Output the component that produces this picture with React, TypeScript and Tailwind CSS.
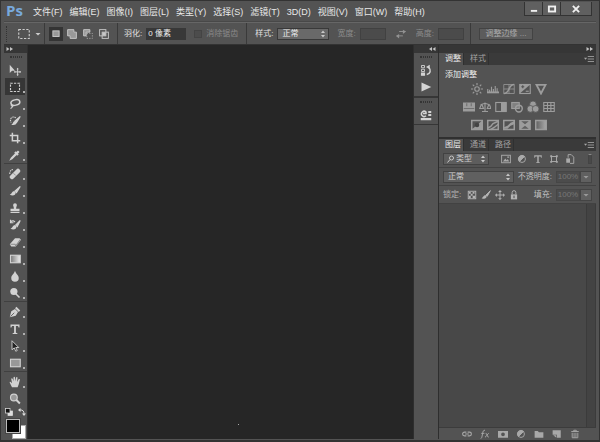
import type { ReactNode } from 'react'

const menus = [
  ['文件', 'F'],
  ['编辑', 'E'],
  ['图像', 'I'],
  ['图层', 'L'],
  ['类型', 'Y'],
  ['选择', 'S'],
  ['滤镜', 'T'],
  ['3D', 'D'],
  ['视图', 'V'],
  ['窗口', 'W'],
  ['帮助', 'H'],
]

function Icon({ children, className = 'size-3' }: { children: ReactNode; className?: string }) {
  return (
    <svg viewBox="0 0 16 16" className={`shrink-0 ${className}`} fill="none" stroke="currentColor" strokeWidth="1.5" aria-hidden="true">
      {children}
    </svg>
  )
}

// Toolbox, split into the groups that have a divider between them
const toolGroups: { name: string; art: ReactNode; active?: boolean; single?: boolean }[][] = [
  [
    { name: '移动工具', single: true, art: <><path d="M1 1v11l3-3h4z" fill="currentColor" stroke="none" /><path d="M11.500 6v9M7 10.500h9" strokeWidth="1.300" /><path d="M11.500 5l1.500 2h-3zM11.500 16l1.500-2h-3zM6.500 10.500l2-1.500v3zM16 10.500l-2-1.500v3z" fill="currentColor" stroke="none" /></> },
    { name: '矩形选框工具', active: true, art: <rect x="2" y="3" width="12" height="11" strokeDasharray="3 1.600" /> },
    { name: '套索工具', art: <><ellipse cx="8.500" cy="6" rx="6" ry="3.600" transform="rotate(-12 8.500 6)" strokeWidth="2" /><path d="M4 8c-2 1-1 3 .5 2.500S4 13 2 14" /></> },
    { name: '快速选择工具', art: <><path d="M15 2L8 8l2 2z" fill="currentColor" /><path d="M8 8c-3 0-2 4-5 5 4 1 7 0 7-3z" fill="currentColor" stroke="none" /><path d="M9 4a4 4 0 0 0-7 3 4 4 0 0 0 1 3" strokeDasharray="2 1" /></> },
    { name: '裁剪工具', art: <path d="M4.500 1v10.500H15M1 4.500h10.500V15" strokeWidth="2" /> },
    { name: '吸管工具', art: <><path d="M9 6l-6 6-1 2 2-1 6-6" /><path d="M8 4l4 4M10 6l3-3" strokeWidth="3" /></> },
  ],
  [
    { name: '污点修复画笔工具', art: <><path d="M4 12l8-8" strokeWidth="6" strokeLinecap="round" /><path d="M6 7l3 3" stroke="#777" strokeWidth="1" /><path d="M1 8c0-4 2-6 5-6" strokeDasharray="2 1" /></> },
    { name: '画笔工具', art: <><path d="M15 2L8 8l2 2z" fill="currentColor" /><path d="M7 8c-3 0-3 4-6 5 4 2 8 1 8-3z" fill="currentColor" stroke="none" /></> },
    { name: '仿制图章工具', art: <path d="M5.500 4a2.500 2.500 0 0 1 5 0c0 2-1 2-1 5H14v3H2V9h4.500c0-3-1-3-1-5zM2 13h12v1.500H2z" fill="currentColor" stroke="none" /> },
    { name: '历史记录画笔工具', art: <><path d="M15 2L9 8l2 2z" fill="currentColor" /><path d="M8 8c-3 0-3 4-6 5 4 2 8 1 8-3z" fill="currentColor" stroke="none" /><path d="M2 4c3-3 5-1 6 0M2 1v4h4" /></> },
    { name: '橡皮擦工具', art: <><path d="M8 3h6l2 2-7 9H3l-2-3z" fill="currentColor" stroke="none" /><path d="M15 5l-6 8-1-2H2" stroke="#8a8a8a" /></> },
    { name: '渐变工具', art: <><defs><linearGradient id="ramp"><stop stopColor="#777" /><stop offset="1" stopColor="#eee" /></linearGradient></defs><rect x="2" y="3" width="13" height="10" fill="url(#ramp)" /></> },
    { name: '模糊工具', art: <path d="M8 1c1 4 5 6 5 9.500a5 5 0 0 1-10 0C3 7 7 5 8 1z" fill="currentColor" stroke="none" /> },
    { name: '减淡工具', art: <><circle cx="6.500" cy="6" r="4.800" fill="currentColor" stroke="none" /><path d="M9 9l5 5" strokeWidth="2.200" /></> },
  ],
  [
    { name: '钢笔工具', art: <><path d="M1 15l2-8 5-3 4 4-3 5z" fill="currentColor" stroke="none" /><path d="M9 2l5 5" strokeWidth="2.500" /><path d="M2 14l5-5" stroke="#444" strokeWidth="1" /></> },
    { name: '横排文字工具', art: <path d="M2 2h12v4h-1.200L12 4H9.200v9l2 .5v1H4.800v-1l2-.5V4H4l-.8 2H2z" fill="currentColor" stroke="none" /> },
    { name: '路径选择工具', art: <path d="M4 1v12l3-2.500L9 15l2-1-2-4h4z" fill="#222" strokeWidth="1.200" /> },
    { name: '矩形工具', art: <rect x="2" y="3" width="13" height="10" fill="#989898" /> },
  ],
  [
    { name: '抓手工具', art: <path d="M4 15L1 9c-.5-1.500 1-2 2-.5l1 1L3 4c0-1.500 1.500-1.500 2 0l1 3V2c0-1.500 2-1.500 2 0l.4 5 1.100-5c.4-1.300 2-1 1.800.4L10.800 8l2-3.600c.8-1 2-.4 1.600.8L13 11l-1.500 4z" fill="currentColor" stroke="none" /> },
    { name: '缩放工具', single: true, art: <><circle cx="6.500" cy="6" r="4.500" fill="#999" /><path d="M9.500 9l5 5" strokeWidth="2.500" /></> },
  ],
]

const adjustments: { name: string; art: ReactNode }[][] = [
  [
    { name: '亮度/对比度', art: <><circle cx="8" cy="8" r="3" /><path d="M8 0v3M8 13v3M0 8h3M13 8h3M2.300 2.300l2 2M11.700 11.700l2 2M2.300 13.700l2-2M11.700 4.300l2-2" /></> },
    { name: '色阶', art: <><path d="M0 12.500h16" strokeWidth="2.500" /><path d="M1 12V8M3.500 12V9M6 12V5M8.500 12V8M11 12V4M13.500 12V7" /></> },
    { name: '曲线', art: <><path d="M1 2h14v12H1zM1 8h14M8 2v12" strokeWidth="1" /><path d="M1 14C10 14 6 2 15 2" strokeWidth="2" /></> },
    { name: '曝光度', art: <><rect x="1" y="2" width="14" height="12" /><path d="M1 14V2h14z" fill="currentColor" stroke="none" /><path d="M3 5h4M5 3v4" stroke="#535353" /><path d="M9 11h4" /></> },
    { name: '自然饱和度', art: <path d="M2 2.500h12L8 14z" strokeWidth="2.500" /> },
  ],
  [
    { name: '色相/饱和度', art: <><rect x="0" y="2" width="16" height="12" fill="currentColor" stroke="none" /><path d="M1 10h14M5 3v4M11 3v4" stroke="#707070" /></> },
    { name: '色彩平衡', art: <path d="M8 2v12M4 14h8M2 5l6-2 6 2M3 5l-2 5h5L4 5M13 5l-2 5h5l-2-5" strokeWidth="1.500" /> },
    { name: '黑白', art: <><rect x="1" y="2" width="14" height="12" /><path d="M8 2h7v12H8z" fill="currentColor" stroke="none" /></> },
    { name: '照片滤镜', art: <><rect x="1" y="2" width="10" height="8" fill="#808080" /><circle cx="10.500" cy="10" r="4.500" strokeWidth="2" /></> },
    { name: '通道混合器', art: <g fill="currentColor" stroke="#535353" strokeWidth="1"><circle cx="8" cy="4.500" r="4.500" /><circle cx="4.500" cy="10.500" r="4.500" /><circle cx="11.500" cy="10.500" r="4.500" /></g> },
    { name: '颜色查找', art: <path d="M1 2h14v12H1zM1 6h14M1 10h14M6 2v12M10.500 2v12" /> },
  ],
  [
    { name: '反相', art: <><rect x="1" y="2" width="14" height="12" strokeWidth="2" /><path d="M15 2v12H1z" fill="currentColor" stroke="none" /><circle cx="8" cy="8" r="3" fill="#444" stroke="none" /></> },
    { name: '色调分离', art: <><rect x="1" y="2" width="14" height="12" strokeWidth="2" /><path d="M1 12l4-2 3-4 7-3M5 14l5-3 5-4" strokeWidth="2" /></> },
    { name: '阈值', art: <><rect x="1" y="2" width="14" height="12" strokeWidth="2" /><path d="M1 11l5-2 4-4 5-2v4l-5 2-4 4H1z" fill="currentColor" stroke="none" /></> },
    { name: '可选颜色', art: <><rect x="1" y="2" width="14" height="12" fill="currentColor" /><path d="M3 3h10L8 7zM3 13h10L8 9z" fill="#606060" stroke="none" /></> },
    { name: '渐变映射', art: <><defs><linearGradient id="map"><stop stopColor="#606060" /><stop offset="1" stopColor="#aaa" /></linearGradient></defs><rect x="1" y="2" width="14" height="12" strokeWidth="2" fill="url(#map)" /></> },
  ],
]

const filters = [
  { name: '像素图层滤镜', art: <><rect x="1" y="2" width="14" height="12" /><path d="M3 12l4-5 2 3 2-2 2 4zM10 4h3v2h-3z" fill="currentColor" stroke="none" /></> },
  { name: '调整图层滤镜', art: <><circle cx="8" cy="8" r="5.500" /><path d="M4 4a5.600 5.600 0 0 0 0 8l8-8a5.600 5.600 0 0 0-8 0z" fill="currentColor" /></> },
  { name: '文字图层滤镜', art: <path d="M2 2h12v4h-1L12 4H9.200v9l2 .5v1H4.800v-1l2-.5V4H4L3 6H2z" fill="currentColor" stroke="none" /> },
  { name: '形状图层滤镜', art: <><rect x="4" y="4" width="8" height="8" /><path d="M2 2h3v3H2zM11 2h3v3h-3zM2 11h3v3H2zM11 11h3v3h-3z" fill="currentColor" stroke="none" /></> },
  { name: '智能对象滤镜', art: <><path d="M5 6V1h5l4 4v10H8" /><path d="M2 7h6v7H2z" fill="currentColor" stroke="none" /></> },
]

const locks = [
  { name: '锁定透明像素', art: <><rect x="2" y="2" width="12" height="12" /><path d="M3 3h3v3H3zM9 3h3v3H9zM6 6h3v3H6zM3 9h3v4H3zM9 9h4v4H9z" fill="currentColor" stroke="none" /></> },
  { name: '锁定图像像素', art: <><path d="M15 1L8 8l2 2z" fill="currentColor" /><path d="M7 8c-3 0-3 4-6 5 4 2 8 1 8-3z" fill="currentColor" stroke="none" /></> },
  { name: '锁定位置', art: <><path d="M8 2v12M2 8h12" /><path d="M8 0l3 3H5zM8 16l3-3H5zM0 8l3-3v6zM16 8l-3-3v6z" fill="currentColor" stroke="none" /></> },
  { name: '锁定全部', art: <><path d="M5 7V4a3 3 0 0 1 6 0v3" /><path d="M3 7h10v8H3z" fill="currentColor" stroke="none" /><path d="M8 9v4" stroke="#444" /></> },
]

const layerActions = [
  { name: '链接图层', art: <path d="M7 5H4a3 3 0 0 0 0 6h3M9 5h3a3 3 0 0 1 0 6H9M5 8h6" strokeWidth="1.800" /> },
  { name: '添加图层样式', art: <path d="M1 15c2 0 2-2 3-7s1-6 4-6M2 7h5M9 7c3-1 2 7 5 6M14 7c-2 0-4 6-6 6" /> },
  { name: '添加图层蒙版', art: <path d="M0 3h16v11H0zM8 5.500a3 3 0 1 0 0 6 3 3 0 0 0 0-6z" fillRule="evenodd" fill="currentColor" stroke="none" /> },
  { name: '创建新的填充或调整图层', art: <><circle cx="8" cy="8" r="5.500" /><path d="M4 4a5.600 5.600 0 0 0 0 8l8-8a5.600 5.600 0 0 0-8 0z" fill="currentColor" /></> },
  { name: '创建新组', art: <path d="M1 3h5l2 2h7v9H1z" fill="currentColor" stroke="none" /> },
  { name: '创建新图层', art: <><path d="M1 2h13v12H8V9H1z" fill="currentColor" stroke="none" /><path d="M2 10h5v4z" fill="currentColor" stroke="none" /></> },
  { name: '删除图层', art: <path d="M2 4h12M6 4V2h4v2M3.500 6v8h9V6M6.500 6v8M9.500 6v8" /> },
]

const booleanModes = [
  { name: '新选区', art: <rect x="3" y="3" width="10" height="9" fill="#999" /> },
  { name: '添加到选区', art: <path d="M1 1h10v4h4v10H5v-4H1z" fill="#999" /> },
  { name: '从选区减去', art: <><path d="M1 1h10v4H5v6H1z" fill="#999" /><path d="M6 7h9v8H6z" strokeDasharray="2 2" strokeWidth="1" /></> },
  { name: '与选区交叉', art: <><rect x="1" y="1" width="10" height="10" /><rect x="5" y="5" width="10" height="10" /><path d="M6 6h4v4H6z" fill="currentColor" /></> },
]

function Steppers() {
  return (
    <Icon className="pointer-events-none absolute top-0.5 right-0.5 size-2 text-[#c8c8c8]">
      <path d="M8 1l4 5H4zM8 15l4-5H4z" fill="currentColor" stroke="none" />
    </Icon>
  )
}

function Grip() {
  return (
    <div className="flex h-2 items-center justify-center">
      <span className="h-0.5 w-3 border-y border-dotted border-[#343434]" />
    </div>
  )
}

function Collapse({ left = false }: { left?: boolean }) {
  return (
    <button aria-label="折叠面板" className="flex h-2 w-3 items-center justify-center text-[#c4c4c4]">
      <Icon className="size-2">
        <path d={left ? 'M8 4v8L2 8zM15 4v8L9 8z' : 'M1 4v8l6-4zM8 4v8l6-4z'} fill="currentColor" stroke="none" />
      </Icon>
    </button>
  )
}

function PanelTabs({ tabs }: { tabs: string[] }) {
  return (
    <div role="tablist" className="flex h-3 bg-[#3a3a3a]">
      {tabs.map((tab, i) => (
        <button
          key={tab}
          role="tab"
          aria-selected={i === 0}
          className={`border-r border-[#303030] pr-0.5 pl-1.5 leading-3 ${i === 0 ? 'bg-[#535353] text-[#e6e6e6]' : 'text-[#a2a2a2]'}`}
        >
          {tab}
        </button>
      ))}
      <button aria-label="面板菜单" className="ml-auto px-0.5 text-[#a8a8a8]">
        <Icon className="size-2.5">
          <path d="M0 6h5L2.500 9z" fill="currentColor" stroke="none" />
          <path d="M6 4h10M6 8h10M6 12h10" strokeWidth="1.300" />
        </Icon>
      </button>
    </div>
  )
}

function Percent({ id, label }: { id: string; label: string }) {
  return (
    <div className="ml-auto flex items-center">
      <label htmlFor={id} className="mr-1 text-[#c0c0c0]">{label}</label>
      <input id={id} disabled defaultValue="100%" className="h-3 w-6 border border-[#464646] bg-[#4c4c4c] text-center text-[#777]" />
      <button aria-label={`${label}滑块`} className="flex h-3 w-3 items-center justify-center border border-[#444] bg-[#606060] text-[#999]">
        <Icon className="size-2"><path d="M3 6h10l-5 5z" fill="currentColor" stroke="none" /></Icon>
      </button>
    </div>
  )
}

function MenuBar() {
  return (
    <header className="flex h-5 items-center border-b border-[#484848] bg-[#535353]">
      <h1 className="w-[29px] self-start pl-0.5 font-['Open_Sans'] text-[15px] leading-4 font-bold text-[#78a9dc]">Ps</h1>
      <nav className="flex gap-[7px] text-[9px] text-[#e8e8e8]">
        {menus.map(([name, key]) => (
          <button key={name} className="whitespace-nowrap">{name}({key})</button>
        ))}
      </nav>
      <div className="mr-1 ml-auto flex h-3.5 self-start border border-t-0 border-[#333] text-[#f0f0f0]">
        <button aria-label="最小化" className="flex w-[18px] items-center justify-center border-r border-[#333] bg-[#606060]">
          <Icon className="size-2.5"><path d="M3 11h10" strokeWidth="3" /></Icon>
        </button>
        <button aria-label="最大化" className="flex w-[18px] items-center justify-center border-r border-[#333] bg-[#606060]">
          <Icon className="size-2.5"><rect x="3" y="4" width="10" height="8" strokeWidth="3" /></Icon>
        </button>
        <button aria-label="关闭" className="flex w-[30px] items-center justify-center bg-[#606060]">
          <Icon className="size-2.5"><path d="M3 3l10 10M13 3L3 13" strokeWidth="3" /></Icon>
        </button>
      </div>
    </header>
  )
}

function OptionsBar() {
  return (
    <div className="flex h-[23px] items-center border-t border-b border-t-[#666] border-b-[#333] bg-[#535353] whitespace-nowrap">
      <span className="mx-0.5 h-4 w-0.5 border-l border-dotted border-[#333]" />
      <button aria-label="工具预设" className="ml-2 flex items-center text-[#ccc]">
        <Icon><rect x="1" y="2" width="14" height="12" strokeDasharray="3 2" /></Icon>
        <Icon className="ml-1 size-2"><path d="M3 6h10l-5 5z" fill="currentColor" stroke="none" /></Icon>
      </button>
      <div className="ml-0.5 flex h-full items-center gap-0.5 border-l border-[#3a3a3a] pl-1 text-[#c8c8c8]">
        {booleanModes.map((mode, i) => (
          <button key={mode.name} aria-label={mode.name} className={`flex h-3.5 w-3.5 items-center justify-center ${i === 0 ? 'bg-[#343434]' : ''}`}>
            <Icon className="size-2.5">{mode.art}</Icon>
          </button>
        ))}
      </div>
      <div className="ml-1.5 flex h-full items-center border-l border-[#3a3a3a] pl-1.5">
        <label htmlFor="feather" className="mr-1 text-[#e0e0e0]">羽化:</label>
        <input id="feather" defaultValue="0 像素" className="h-3 w-10 bg-[#383838] pl-0.5 text-[#eee]" />
      </div>
      <label className="ml-2 flex items-center gap-1 text-[#898989]">
        <input type="checkbox" disabled className="size-2 appearance-none border border-[#444] bg-[#4c4c4c]" />
        消除锯齿
      </label>
      <div className="ml-2 flex h-full items-center border-l border-[#3a3a3a] pl-2">
        <label htmlFor="style" className="mr-1 text-[#e0e0e0]">样式:</label>
        <span className="relative">
          <select id="style" className="block h-3 w-[52px] appearance-none border border-[#393939] bg-[#696969] pl-1 leading-[10px] text-[#eee]">
            <option>正常</option>
          </select>
          <Steppers />
        </span>
      </div>
      <label htmlFor="width" className="mr-1 ml-2 text-[#8c8c8c]">宽度:</label>
      <input id="width" disabled className="h-3 w-[26px] border border-[#414141] bg-[#4b4b4b]" />
      <button aria-label="高度和宽度互换" className="mx-2.5 text-[#929292]">
        <Icon className="size-2.5"><path d="M5 4h10M1 11h10" /><path d="M11 1v7l5-4zM5 8v7l-5-4z" fill="currentColor" stroke="none" /></Icon>
      </button>
      <label htmlFor="height" className="mr-1 text-[#8c8c8c]">高度:</label>
      <input id="height" disabled className="h-3 w-[26px] border border-[#414141] bg-[#4b4b4b]" />
      <div className="ml-1.5 flex h-full items-center border-l border-[#3a3a3a] pl-2">
        <button className="h-3 w-[54px] border border-[#434343] bg-[#5c5c5c] leading-[10px] text-[#aaa]">调整边缘 ...</button>
      </div>
    </div>
  )
}

function Toolbox() {
  return (
    <aside className="flex w-6 shrink-0 flex-col border-r border-[#303030] bg-[#535353]">
      <div className="flex h-2 bg-[#363636]"><Collapse /></div>
      <Grip />
      {toolGroups.map((group, g) => (
        <div key={g} className={`border-[#404040] ${g > 0 ? 'border-t pt-px' : ''}`}>
          {group.map((tool) => (
            <button
              key={tool.name}
              aria-label={tool.name}
              className={`relative mx-px flex h-[17px] w-5 items-center justify-center text-[#d2d2d2] ${tool.active ? 'bg-[#363636]' : ''}`}
            >
              <Icon>{tool.art}</Icon>
              {!tool.single && <span className="absolute right-0 bottom-0.5 size-0.5 bg-[#b0b0b0]" />}
            </button>
          ))}
        </div>
      ))}
      <div className="flex flex-col items-center">
        <div className="flex h-2.5 w-full items-center justify-between px-px text-[#ddd]">
          <button aria-label="默认前景色和背景色">
            <Icon className="size-2"><rect x="6" y="6" width="9" height="9" fill="#ddd" /><rect x="1" y="1" width="9" height="9" fill="#111" /></Icon>
          </button>
          <button aria-label="切换前景色和背景色">
            <Icon className="size-2"><path d="M4 4c6-1 8 3 8 8" strokeWidth="2" /><path d="M5 0v8L0 4zM8 11h8l-4 5z" fill="currentColor" stroke="none" /></Icon>
          </button>
        </div>
        <div className="relative mt-0.5 size-5">
          <button aria-label="背景色" className="absolute right-0 bottom-0 size-3.5 border border-[#aaa] bg-white" />
          <button aria-label="前景色" className="absolute top-0 left-0 size-3.5 border border-[#bbb] bg-black outline outline-[#444]" />
        </div>
      </div>
    </aside>
  )
}

function IconDock() {
  return (
    <aside className="flex w-[26px] shrink-0 flex-col border-x border-[#2e2e2e] bg-[#535353] text-[#d4d4d4]">
      <div className="flex h-2 justify-end bg-[#363636]"><Collapse left /></div>
      <div className="flex flex-col border-b-2 border-[#363636] pb-px">
        <Grip />
        <button aria-label="历史记录" className="flex h-[17px] items-center justify-center">
          <Icon><path d="M2 2h4v3H2zM2 7h4v3H2z" strokeWidth="1.200" /><path d="M2 12h4v3H2z" fill="currentColor" /><path d="M9 14c5-1 6-6 3-9" strokeWidth="2" /><path d="M8 4l5-3v6z" fill="currentColor" stroke="none" /></Icon>
        </button>
        <button aria-label="动作" className="flex h-[17px] items-center justify-center">
          <Icon><path d="M2 2v12l13-6z" fill="currentColor" stroke="none" /></Icon>
        </button>
      </div>
      <div className="flex flex-col border-b border-[#363636] pb-px">
        <Grip />
        <button aria-label="属性" className="flex h-[17px] items-center justify-center">
          <Icon><path d="M8 9a3.500 3.500 0 1 1 0-5v2H4" strokeWidth="2" /><path d="M11 4h4M11 8h4" strokeWidth="2.500" /><path d="M1 13.500h14" strokeWidth="3" /></Icon>
        </button>
      </div>
    </aside>
  )
}

function Panels() {
  return (
    <aside className="flex w-[157px] shrink-0 flex-col bg-[#535353]">
      <div className="flex h-2 justify-end bg-[#363636]"><Collapse /></div>
      <section className="flex h-[84px] flex-col">
        <PanelTabs tabs={['调整', '样式']} />
        <h2 className="px-1.5 pt-1 leading-3 text-[#eee]">添加调整</h2>
        <div className="mt-0.5 flex flex-col gap-1.5 pr-[18px] text-[#9c9c9c]">
          {adjustments.map((row, i) => (
            <div key={i} className="flex justify-center gap-1">
              {row.map((item) => (
                <button key={item.name} aria-label={item.name}><Icon>{item.art}</Icon></button>
              ))}
            </div>
          ))}
        </div>
      </section>
      <section className="flex flex-1 flex-col border-t-2 border-[#303030]">
        <PanelTabs tabs={['图层', '通道', '路径']} />
        <div className="flex h-[17px] items-center border-b border-[#424242] px-1">
          <span className="relative text-[#c8c8c8]">
            <select aria-label="滤镜类型" className="block h-3 w-[46px] appearance-none border border-[#424242] bg-[#5d5d5d] pl-3 leading-[10px]">
              <option>类型</option>
            </select>
            <Icon className="pointer-events-none absolute top-0.5 left-1 size-2"><circle cx="9" cy="6" r="4" strokeWidth="2" /><path d="M6 9l-5 6" strokeWidth="2" /></Icon>
            <Steppers />
          </span>
          <div className="ml-3 flex gap-1.5 text-[#aaa]">
            {filters.map((item) => (
              <button key={item.name} aria-label={item.name}><Icon className="size-2.5">{item.art}</Icon></button>
            ))}
          </div>
          <button aria-label="打开或关闭图层滤镜" className="ml-auto h-2.5 w-1 border border-[#444] border-t-[#888] bg-[#494949]" />
        </div>
        <div className="flex h-[18px] items-center border-b border-[#424242] px-1">
          <span className="relative text-[#d0d0d0]">
            <select aria-label="混合模式" className="block h-3 w-[71px] appearance-none border border-[#424242] bg-[#606060] pl-1 leading-[10px]">
              <option>正常</option>
            </select>
            <Steppers />
          </span>
          <Percent id="opacity" label="不透明度:" />
        </div>
        <div className="flex h-[18px] items-center border-b border-[#424242] px-1">
          <span className="text-[#b4b4b4]">锁定:</span>
          <div className="ml-1.5 flex gap-1 text-[#b4b4b4]">
            {locks.map((item) => (
              <button key={item.name} aria-label={item.name}><Icon className="size-2.5">{item.art}</Icon></button>
            ))}
          </div>
          <Percent id="fill" label="填充:" />
        </div>
        <div className="flex flex-1 justify-end bg-[#484848]">
          <span className="w-2.5 border-x border-[#3b3b3b] bg-[#434343]" />
        </div>
        <div className="flex h-3 items-center justify-center gap-2 border-t border-[#3c3c3c] pl-1.5 text-[#a8a8a8]">
          {layerActions.map((item) => (
            <button key={item.name} aria-label={item.name}><Icon className="size-2.5">{item.art}</Icon></button>
          ))}
        </div>
      </section>
    </aside>
  )
}

export default function App() {
  return (
    <div className="flex min-h-screen flex-col border border-b-2 border-[#333] bg-[#535353] px-[3px] pt-px pb-px font-['Liberation_Sans','Noto_Sans_CJK_SC',sans-serif] text-[8px] leading-3">
      <MenuBar />
      <OptionsBar />
      <div className="flex flex-1">
        <Toolbox />
        <main className="flex min-w-0 flex-1 items-end justify-center bg-[#262626] pb-3.5 pl-9">
          <span className="size-px bg-[#aaa]" />
        </main>
        <IconDock />
        <Panels />
      </div>
    </div>
  )
}
